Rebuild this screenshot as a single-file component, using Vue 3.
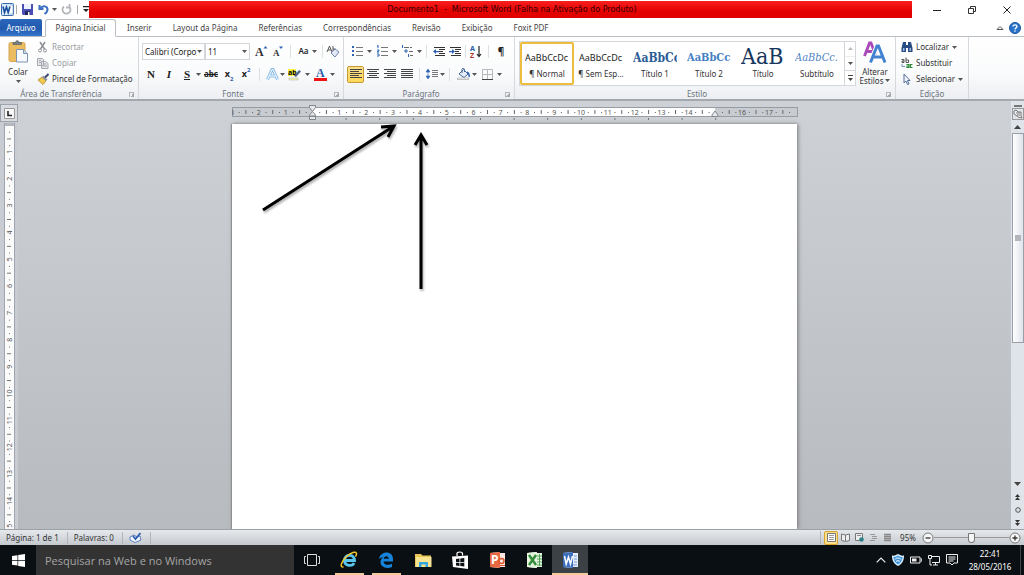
<script setup>
import { ref } from 'vue'

const tabs = ['Inserir', 'Layout da Página', 'Referências', 'Correspondências', 'Revisão', 'Exibição', 'Foxit PDF']
const styles = [
  { name: '¶ Normal', sample: 'AaBbCcDc', kind: 'body' },
  { name: '¶ Sem Esp...', sample: 'AaBbCcDc', kind: 'body' },
  { name: 'Título 1', sample: 'AaBbCc', kind: 'h1' },
  { name: 'Título 2', sample: 'AaBbCc', kind: 'h2' },
  { name: 'Título', sample: 'AaB', kind: 'title' },
  { name: 'Subtítulo', sample: 'AaBbCc.', kind: 'sub' }
]
const current = ref(0)
const search = ref('')
const zoom = ref(50)

const cm = 26.85
const origin = 80.5
function marks(from, to) {
  const list = []
  for (let q = from * 4; q <= to * 4; q++) {
    if (q === 0) continue
    const kind = q % 4 === 0 ? 'num' : q % 2 === 0 ? 'bar' : 'dot'
    list.push({ q, kind, pos: (q / 4) * cm, label: Math.abs(q / 4) })
  }
  return list
}
const across = marks(-3, 17.75).filter((m) => m.q !== 60)
const down = marks(0, 15)
const stops = [1, 2, 3, 4, 5, 6, 7, 8, 9, 10, 11, 12]
const lines = { left: [12, 9, 12, 9, 12], center: [12, 8, 12, 8, 12], right: [12, 9, 12, 9, 12], full: [12, 12, 12, 12, 12] }
function lineStart(kind, w) {
  if (kind === 'right') return 12 - w
  if (kind === 'center') return (12 - w) / 2
  return 0
}
</script>

<template>
  <div class="window">
    <header class="titlebar">
      <div class="quick">
        <svg class="wlogo" width="13" height="13" viewBox="0 0 13 13"><rect x=".5" y=".5" width="12" height="12" rx="1" fill="#dcebfa" stroke="#3569ac" /><path d="M9 2h3v9H9" fill="#fff" stroke="#7fa3d1" stroke-width=".7" /><path d="M2 3.500l1.500 6L5.500 4l1.700 5.500L9 3.500" fill="none" stroke="#1d4f9c" stroke-width="1.600" /></svg>
        <i class="bar"></i>
        <button aria-label="Salvar"><svg width="11" height="11" viewBox="0 0 11 11"><path d="M0 0h11v11H1L0 10z" fill="#4a4fb5" /><path d="M2 0h7v5H2z" fill="#eef2ff" /><path d="M3 7h5v4H3z" fill="#23285f" /><path d="M6 8h1.500v3H6z" fill="#fff" /></svg></button>
        <button aria-label="Desfazer"><svg width="11" height="11" viewBox="0 0 11 11"><path d="M1.500 1v4h4M2 4.500C5 1 9.500 2 9.500 5.500 9.500 8 8 9 6.500 10" fill="none" stroke="#3b6fc4" stroke-width="2" /></svg></button>
        <svg class="drop" viewBox="0 0 5 3"><path d="M0 0h5L2.500 3z" /></svg>
        <button aria-label="Refazer" class="redo"><svg width="11" height="11" viewBox="0 0 11 11"><path d="M3 2.500A4 4 0 1 0 8 2.500M8.500 0v3.500H5" fill="none" stroke="#b4b7bb" stroke-width="1.800" /></svg></button>
        <i class="bar"></i>
        <button aria-label="Personalizar"><svg width="6" height="7" viewBox="0 0 6 7"><path d="M0 0h6v1.200H0zM0 3h6L3 6z" fill="#222" /></svg></button>
      </div>
      <h1>Documento1 &nbsp;- &nbsp;Microsoft Word (Falha na Ativação do Produto)</h1>
      <div class="controls">
        <button aria-label="Minimizar"><svg width="10" height="10" viewBox="0 0 10 10"><path d="M1 5.500h8" stroke="#222" /></svg></button>
        <button aria-label="Restaurar"><svg width="10" height="10" viewBox="0 0 10 10"><path d="M1.500 3.500h5v5h-5zM3.500 3V1.500h5v5H7" fill="none" stroke="#333" /></svg></button>
        <button aria-label="Fechar"><svg width="10" height="10" viewBox="0 0 10 10"><path d="M1.500 1.500l7 7M8.500 1.500l-7 7" stroke="#222" /></svg></button>
      </div>
    </header>

    <nav class="tabs">
      <button class="file">Arquivo</button>
      <button class="active">Página Inicial</button>
      <button v-for="t in tabs" :key="t">{{ t }}</button>
      <span class="grow"></span>
      <button class="mini" aria-label="Minimizar faixa"><svg width="8" height="6" viewBox="0 0 8 6"><path d="M1 4.500L4 1.500l3 3z" fill="#fff" stroke="#555" /></svg></button>
      <button class="mini help" aria-label="Ajuda"><svg width="12" height="12" viewBox="0 0 12 12"><circle cx="6" cy="6" r="5.500" fill="#2b73c9" stroke="#1a55a0" /><path d="M4 4.600C4 2.400 8 2.400 8 4.600 8 6 6 5.800 6 7.400M6 8.400v1.400" fill="none" stroke="#fff" stroke-width="1.300" /></svg></button>
    </nav>

    <section class="ribbon">
      <div class="group clip">
        <div class="body">
          <button class="paste">
            <svg width="21" height="23" viewBox="0 0 21 23"><rect x="1" y="2.500" width="16" height="19" rx="1.500" fill="#ecbd60" stroke="#d6a650" /><path d="M5 4.500V2.500h2.500C7.500 0 11 0 11 2.500h2.500v2z" fill="#777d85" stroke="#555b63" stroke-width=".6" /><path d="M8.500 9.500h7l4 4v8.500h-11z" fill="#f6f9fd" stroke="#7c92b2" /><path d="M15.500 9.500v4h4" fill="#c9d8ea" stroke="#7c92b2" /></svg>
            <span>Colar</span>
            <svg class="drop" viewBox="0 0 5 3"><path d="M0 0h5L2.500 3z" /></svg>
          </button>
          <div class="stack">
            <button class="off"><svg width="12" height="12" viewBox="0 0 12 12"><path d="M3 1l4.500 7M8 1L3.500 8" stroke="#8d9197" stroke-width="1.500" /><circle cx="3" cy="9.500" r="1.500" fill="none" stroke="#8d9197" /><circle cx="8" cy="9.500" r="1.500" fill="none" stroke="#8d9197" /></svg>Recortar</button>
            <button class="off"><svg width="12" height="12" viewBox="0 0 12 12"><path d="M.5 1.500h5l1 1v6h-6zM4.500 4.500h4l2.500 2v5H4.500z" fill="#e3e5e8" stroke="#a6aab0" /><path d="M6 7h3M6 9h4M2 3.500h2M2 5.500h2" stroke="#a6aab0" /></svg>Copiar</button>
            <button><svg width="12" height="12" viewBox="0 0 12 12"><path d="M1 7l4-3 4 4-3 3.500z" fill="#f0ca4b" stroke="#a57c1c" stroke-width=".7" /><path d="M5 4l1.500-1.500 4 4L9 8z" fill="#8d97a6" /><path d="M8 4.500L11.500 1" stroke="#3d4b69" stroke-width="2" /></svg>Pincel de Formatação</button>
          </div>
        </div>
        <footer>Área de Transferência<i class="launch"></i></footer>
      </div>

      <div class="group font">
        <div class="body rows">
          <div class="row">
            <label class="combo face"><input aria-label="Fonte" value="Calibri (Corpo)"><svg class="drop" viewBox="0 0 5 3"><path d="M0 0h5L2.500 3z" /></svg></label>
            <label class="combo size"><input aria-label="Tamanho" value="11"><svg class="drop" viewBox="0 0 5 3"><path d="M0 0h5L2.500 3z" /></svg></label>
            <button class="tool w18" aria-label="Aumentar fonte"><svg width="13" height="12" viewBox="0 0 13 12"><text x="0" y="11" class="serif" font-size="12">A</text><path d="M8.500 3.500h4l-2-2.500z" fill="#2d62b5" /></svg></button>
            <button class="tool w16" aria-label="Reduzir fonte"><svg width="12" height="12" viewBox="0 0 12 12"><text x="1" y="11" class="serif" font-size="9">A</text><path d="M7 1.500h4L9 4z" fill="#2d62b5" /></svg></button>
            <i class="sep"></i>
            <button class="tool w26 case">Aa<svg class="drop" viewBox="0 0 5 3"><path d="M0 0h5L2.500 3z" /></svg></button>
            <i class="sep tight"></i>
            <button class="tool w16" aria-label="Limpar formatação"><svg width="14" height="13" viewBox="0 0 14 13"><path d="M1 7l2.500-6L6 7M2 5h3M7 1v5M7 4h2.500v2H7" fill="none" stroke="#555" /><path d="M5 8l4-4 4 3-4 5z" fill="#e3e9f5" stroke="#7085b3" /><path d="M5 8l4 4" stroke="#7085b3" /></svg></button>
          </div>
          <div class="row">
            <button class="tool w18 bold">N</button>
            <button class="tool w18 ital">I</button>
            <button class="tool w18 under">S</button><svg class="drop" viewBox="0 0 5 3"><path d="M0 0h5L2.500 3z" /></svg>
            <button class="tool w20 strike">abc</button>
            <button class="tool w16 script">x<sub>2</sub></button>
            <button class="tool w18 script">x<sup>2</sup></button>
            <i class="sep"></i>
            <button class="tool w16" aria-label="Efeitos de texto"><svg width="13" height="13" viewBox="0 0 13 13"><path d="M1.500 11.500L6 1.500h1l4.500 10M3.500 8h6" fill="none" stroke="#8abce8" stroke-width="3" /><path d="M1.500 11.500L6 1.500h1l4.500 10M3.500 8h6" fill="none" stroke="#fff" stroke-width="1" /></svg></button><svg class="drop" viewBox="0 0 5 3"><path d="M0 0h5L2.500 3z" /></svg>
            <button class="tool w20" aria-label="Realce"><svg width="14" height="13" viewBox="0 0 14 13"><path d="M0 1h8v7H0z" fill="#f7ef45" /><text x="0" y="7" font-size="7" class="bolder">ab</text><path d="M6 8l5-6 2 1.500L8 9z" fill="#53698c" /><path d="M1 10h9v2H1z" fill="#f7f7b0" stroke="#aaa" stroke-width=".5" /></svg></button><svg class="drop" viewBox="0 0 5 3"><path d="M0 0h5L2.500 3z" /></svg>
            <button class="tool w20" aria-label="Cor da fonte"><svg width="13" height="13" viewBox="0 0 13 13"><text x="2" y="9" font-size="12" class="serif blue">A</text><path d="M0 10h13v3H0z" fill="#f01212" /></svg></button><svg class="drop" viewBox="0 0 5 3"><path d="M0 0h5L2.500 3z" /></svg>
          </div>
        </div>
        <footer>Fonte<i class="launch"></i></footer>
      </div>

      <div class="group para">
        <div class="body rows">
          <div class="row">
            <button class="tool w20" aria-label="Marcadores"><svg width="11" height="12" viewBox="0 0 11 12"><path d="M0 1h2v2H0zM0 5h2v2H0zM0 9h2v2H0z" fill="#2f64b4" /><path d="M4 2.500h7M4 6.500h7M4 10.500h7" stroke="#777" /></svg></button><svg class="drop" viewBox="0 0 5 3"><path d="M0 0h5L2.500 3z" /></svg>
            <button class="tool w20" aria-label="Numeração"><svg width="11" height="12" viewBox="0 0 11 12"><path d="M1 0v3M0 5h2v1L0 7h2M0 9h2v2H0M0 1h1" fill="none" stroke="#2f64b4" /><path d="M4 2.500h7M4 6.500h7M4 10.500h7" stroke="#777" /></svg></button><svg class="drop" viewBox="0 0 5 3"><path d="M0 0h5L2.500 3z" /></svg>
            <button class="tool w20" aria-label="Vários níveis"><svg width="13" height="12" viewBox="0 0 13 12"><path d="M1.500 0v3M4 5h2v2H4zM7.500 9v3" fill="none" stroke="#2f64b4" /><path d="M3 2.500h5M9 2.500h2M8 6.500h4M9 10.500h3" stroke="#666" /></svg></button><svg class="drop" viewBox="0 0 5 3"><path d="M0 0h5L2.500 3z" /></svg>
            <i class="sep"></i>
            <button class="tool w16" aria-label="Diminuir recuo"><svg width="12" height="11" viewBox="0 0 12 11"><path d="M1 1.500h11M6 3.500h6M6 5.500h4M6 7.500h6M2 9.500h10" stroke="#333" /><path d="M0 5.500L3 3v5zM3 5h3v1.200H3z" fill="#2f64b4" /></svg></button>
            <button class="tool w16" aria-label="Aumentar recuo"><svg width="12" height="11" viewBox="0 0 12 11"><path d="M1 1.500h11M6 3.500h6M6 5.500h4M6 7.500h6M2 9.500h10" stroke="#333" /><path d="M6 5.500L3 3v5zM0 5h3v1.200H0z" fill="#2f64b4" /></svg></button>
            <i class="sep tight"></i>
            <button class="tool w16" aria-label="Classificar"><svg width="12" height="13" viewBox="0 0 12 13"><text x="0" y="6" font-size="7" class="bolder blue">A</text><text x="0" y="13" font-size="7" class="bolder red">Z</text><path d="M9 1v10M7 9l2 2.500L11 9" fill="none" stroke="#222" stroke-width="1.200" /></svg></button>
            <i class="sep"></i>
            <button class="tool w16 pil">¶</button>
          </div>
          <div class="row">
            <button v-for="(set, kind) in lines" :key="kind" class="tool align" :class="{ on: kind === 'left' }" :aria-label="kind">
              <svg width="12" height="10" viewBox="0 0 12 10"><rect v-for="(w, i) in set" :key="i" :x="lineStart(kind, w)" :y="i * 2" :width="w" height="1" fill="#444" /></svg>
            </button>
            <i class="sep"></i>
            <button class="tool w16" aria-label="Espaçamento"><svg width="12" height="12" viewBox="0 0 12 12"><path d="M2 2v8M0 4l2-3 2 3zM0 8l2 3 2-3z" fill="#2f64b4" stroke="#2f64b4" stroke-width=".6" /><path d="M6 2.500h6M6 4.500h6M6 6.500h6M6 8.500h6" stroke="#777" /></svg></button><svg class="drop" viewBox="0 0 5 3"><path d="M0 0h5L2.500 3z" /></svg>
            <i class="sep"></i>
            <button class="tool w18" aria-label="Sombreamento"><svg width="13" height="12" viewBox="0 0 13 12"><path d="M2 6l4.500-4.500L11 6 7 9.500z" fill="#e8effa" stroke="#46659a" /><path d="M5 5V1.500C5 0 7.500 0 7.500 1.500V4" fill="none" stroke="#46659a" /><path d="M10 4c2 1 2.500 3 2 5" fill="none" stroke="#2f64b4" stroke-width="1.500" /><path d="M.5 10h11v1.500H.5z" fill="#fff" stroke="#999" stroke-width=".6" /></svg></button><svg class="drop" viewBox="0 0 5 3"><path d="M0 0h5L2.500 3z" /></svg>
            <button class="tool w20" aria-label="Bordas"><svg width="11" height="11" viewBox="0 0 11 11"><path d="M.5 10V.5h10V10M5.500 1v9M1 5.500h9" fill="none" stroke="#b5b8bd" /><path d="M0 10.500h11" stroke="#444" /></svg></button><svg class="drop" viewBox="0 0 5 3"><path d="M0 0h5L2.500 3z" /></svg>
          </div>
        </div>
        <footer>Parágrafo<i class="launch"></i></footer>
      </div>

      <div class="group style">
        <div class="body">
          <div class="gallery">
            <button v-for="(s, i) in styles" :key="s.name" class="card" :class="{ picked: i === current }" @click="current = i">
              <span class="sample" :class="s.kind">{{ s.sample }}</span>
              <span class="name">{{ s.name }}</span>
            </button>
            <div class="pager">
              <button aria-label="Acima" class="dim"><svg class="drop" viewBox="0 0 5 3"><path d="M0 3h5L2.500 0z" /></svg></button>
              <button aria-label="Abaixo"><svg class="drop" viewBox="0 0 5 3"><path d="M0 0h5L2.500 3z" /></svg></button>
              <button aria-label="Mais"><svg width="5" height="6" viewBox="0 0 5 6"><path d="M0 0h5v1H0zM0 3h5L2.500 6z" fill="#444" /></svg></button>
            </div>
          </div>
          <button class="change">
            <svg width="24" height="24" viewBox="0 0 24 24"><path d="M1.500 15L6.500 2h1.500l5 13M3.500 10.500h7.500" fill="none" stroke="#a84ab8" stroke-width="2.800" /><path d="M7.500 21.500L14 5h1.500l6.500 16.500M10 16h9.500" fill="none" stroke="#fff" stroke-width="5" /><path d="M7.500 21.500L14 5h1.500l6.500 16.500M10 16h9.500" fill="none" stroke="#4383d2" stroke-width="3" /></svg>
            <span>Alterar</span><span>Estilos <svg class="drop" viewBox="0 0 5 3"><path d="M0 0h5L2.500 3z" /></svg></span>
          </button>
        </div>
        <footer>Estilo<i class="launch"></i></footer>
      </div>

      <div class="group edit">
        <div class="body">
          <div class="stack">
            <button><svg width="12" height="12" viewBox="0 0 12 12"><path d="M2 1h3v3h2V1h3l1.500 6v4H7V7H5v4H.5V7z" fill="#284d85" /><path d="M2 7h1.500v3H2zM8.500 7H10v3H8.500z" fill="#9db8df" /></svg>Localizar <svg class="drop" viewBox="0 0 5 3"><path d="M0 0h5L2.500 3z" /></svg></button>
            <button><svg width="12" height="12" viewBox="0 0 12 12"><path d="M.5 2.500h2.500v3H1V4h2M5 .5v5h2.500V3H5" fill="none" stroke="#555" /><path d="M5.500 7.500H8v3H6V9h2M11.500 7.500H9.500v3h2" fill="none" stroke="#2f8a3a" stroke-width="1.200" /><path d="M1 7v2.500h3" fill="none" stroke="#4a76b8" stroke-width=".8" /></svg>Substituir</button>
            <button><svg width="12" height="12" viewBox="0 0 12 12"><path d="M3 1v9l2-2 1.500 3.500L8 11 6.500 7.500H9z" fill="#f3f7fd" stroke="#536f9d" /></svg>Selecionar <svg class="drop" viewBox="0 0 5 3"><path d="M0 0h5L2.500 3z" /></svg></button>
          </div>
        </div>
        <footer>Edição</footer>
      </div>
    </section>

    <main class="work">
      <aside class="left">
        <button class="tabsel" aria-label="Tabulação"><svg width="11" height="11" viewBox="0 0 11 11"><path d="M.5.500h10v10H.5z" fill="#f8f8f8" stroke="#999" /><path d="M4 3v4.500h4" fill="none" stroke="#222" stroke-width="1.600" /></svg></button>
        <svg class="vruler" width="11" height="406">
          <rect x="0" y="0" width="11" height="406" fill="#fbfbfc" />
          <rect x="0" y="0" width="11" height="3" fill="#b3b8bf" />
          <path d="M.5 0v406M10.500 0v406" stroke="#9ea5ae" />
          <template v-for="m in down" :key="m.q">
            <text v-if="m.kind === 'num'" :transform="`translate(8 ${m.pos + 2}) rotate(-90)`" class="tick">{{ m.label }}</text>
            <rect v-else :x="m.kind === 'bar' ? 3 : 5" :y="m.pos + 2" :width="m.kind === 'bar' ? 4 : 1" height="1" fill="#777" />
          </template>
        </svg>
      </aside>

      <div class="canvas">
        <svg class="hruler" width="566" height="17">
          <rect x=".5" y="3.500" width="565" height="9" fill="#c8ccd1" stroke="#959ca5" />
          <rect x="80" y="4" width="403" height="8" fill="#fff" />
          <template v-for="m in across" :key="m.q">
            <text v-if="m.kind === 'num'" :x="origin + m.pos" y="11" class="tick">{{ m.label }}</text>
            <rect v-else :x="origin + m.pos" :y="m.kind === 'bar' ? 6 : 8" width="1" :height="m.kind === 'bar' ? 4 : 1" fill="#666" />
          </template>
          <rect v-for="s in stops" :key="s" :x="80 + s * 33.600" y="14" width="1" height="2" fill="#777" />
          <path d="M77.500 1.500h6v2l-3 4-3-4zM77.500 12v-1l3-3.500 3 3.500v1zM77.500 12.500h6v3h-6z" fill="#e9eaec" stroke="#81868d" />
          <path d="M480 12.500v-1.500l3-4 3 4v1.500z" fill="#e9eaec" stroke="#81868d" />
        </svg>
        <article class="page">
          <svg class="notes" width="200" height="180">
            <g fill="none" stroke="#000" stroke-width="3">
              <path d="M31 86L162 2M149 3l13-1-6 11" />
              <path d="M189 165V11M183 21l6-10 6 10" />
            </g>
          </svg>
        </article>
      </div>

      <aside class="scroll">
        <i class="split"></i>
        <button class="rulerbtn" aria-label="Régua"><svg width="10" height="10" viewBox="0 0 10 10"><path d="M1 2l2-1 2 2h3v4l1 2-3-.5L4 7 1 5z" fill="#f2eef2" stroke="#777" /><path d="M3 4h4M4 6h3" stroke="#777" /></svg></button>
        <button class="arrow" aria-label="Subir"><svg width="7" height="4" viewBox="0 0 7 4"><path d="M0 4h7L3.500 0z" fill="#444" /></svg></button>
        <div class="track"><div class="thumb"><i></i></div></div>
        <button class="arrow" aria-label="Descer"><svg width="7" height="4" viewBox="0 0 7 4"><path d="M0 0h7L3.500 4z" fill="#444" /></svg></button>
        <button class="nav" aria-label="Página anterior"><svg width="5" height="6" viewBox="0 0 5 6"><path d="M0 3h5L2.500 0zM0 6h5L2.500 3z" fill="#333" /></svg></button>
        <button class="nav" aria-label="Objeto"><svg width="6" height="6" viewBox="0 0 6 6"><circle cx="3" cy="3" r="2.300" fill="none" stroke="#555" /></svg></button>
        <button class="nav" aria-label="Próxima página"><svg width="5" height="6" viewBox="0 0 5 6"><path d="M0 0h5L2.500 3zM0 3h5L2.500 6z" fill="#333" /></svg></button>
      </aside>
    </main>

    <footer class="status">
      <span class="cell">Página: 1 de 1</span>
      <span class="cell">Palavras: 0</span>
      <span class="cell"><svg width="13" height="11" viewBox="0 0 13 11"><path d="M1 5l4-2 3 2 3-1 1 4-6 2.500L1 8z" fill="#f4f7fc" stroke="#5c7fb8" /><path d="M4 4l2.500 3L11.500 1" fill="none" stroke="#2a5db0" stroke-width="1.800" /></svg></span>
      <span class="grow"></span>
      <i class="sep"></i>
      <button class="view on" aria-label="Layout de impressão"><svg width="9" height="9" viewBox="0 0 9 9"><path d="M.5.500h8v8h-8z" fill="#fff" stroke="#777" /><path d="M2 2.500h5M2 4.500h5M2 6.500h5" stroke="#999" /></svg></button>
      <button class="view" aria-label="Leitura"><svg width="9" height="9" viewBox="0 0 9 9"><path d="M.5 1l4 1 4-1v6.500l-4 1-4-1zM4.500 2v6" fill="#eee" stroke="#777" /></svg></button>
      <button class="view" aria-label="Layout da Web"><svg width="9" height="9" viewBox="0 0 9 9"><path d="M.5.500h7v7h-7z" fill="#eee" stroke="#777" /><path d="M2 2.500h4" stroke="#888" /><circle cx="6.500" cy="6.500" r="2.300" fill="#2d7f86" /></svg></button>
      <button class="view" aria-label="Estrutura"><svg width="9" height="9" viewBox="0 0 9 9"><path d="M1 1.500h5M3 3.500h5M3 5.500h5M1 7.500h5" stroke="#999" /></svg></button>
      <button class="view" aria-label="Rascunho"><svg width="9" height="9" viewBox="0 0 9 9"><path d="M1 1.500h7M1 3.500h7M1 5.500h7M1 7.500h7" stroke="#888" stroke-width="1.500" /></svg></button>
      <span class="percent">95%</span>
      <button class="round" aria-label="Reduzir"><svg width="12" height="12" viewBox="0 0 12 12"><circle cx="6" cy="6" r="5" fill="#f5f6f7" stroke="#777" /><path d="M3.500 6h5" stroke="#333" stroke-width="1.300" /></svg></button>
      <input v-model="zoom" type="range" aria-label="Zoom">
      <button class="round" aria-label="Ampliar"><svg width="12" height="12" viewBox="0 0 12 12"><circle cx="6" cy="6" r="5" fill="#f5f6f7" stroke="#777" /><path d="M3.500 6h5M6 3.500v5" stroke="#333" stroke-width="1.300" /></svg></button>
    </footer>

    <div class="taskbar">
      <button class="start" aria-label="Iniciar"><svg width="13" height="13" viewBox="0 0 13 13"><path d="M0 2l5.500-.8V6H0zM6.200 1.100L13 0v6H6.200zM0 6.800h5.500v4.800L0 10.800zM6.200 6.800H13V13l-6.800-1.100z" fill="#fff" /></svg></button>
      <input v-model="search" class="search" aria-label="Pesquisar" placeholder="Pesquisar na Web e no Windows">
      <button class="app" aria-label="Visão de tarefas"><svg width="16" height="12" viewBox="0 0 16 12"><path d="M3.500.500h9v11h-9zM2 2.500H.5v7H2M14 2.500h1.500v7H14" fill="none" stroke="#ddd" /></svg></button>
      <button class="app open" aria-label="Internet Explorer"><svg width="18" height="18" viewBox="0 0 18 18"><path d="M5 9.500h9.500C14.500 2.500 4.500 2.500 4.500 9.500c0 6 8 6 9.500 2.500" fill="none" stroke="#58c5ef" stroke-width="2.800" /><path d="M3.500 16C-.5 16.500 1 11 6 6s10-6 10.500-3.500c.2 1-.3 2-1 3" fill="none" stroke="#f4c52e" stroke-width="1.500" /></svg></button>
      <button class="app open" aria-label="Edge"><svg width="16" height="16" viewBox="0 0 16 16"><path d="M1 7C2-1.500 15-2 15 7v2.500H5.500c.5 4 5 4 8.500 2.200V15C8.500 17.500 2.500 15 2.500 10c0-2.500 1.500-4 3-5C4 5 2 6 1 7zM5.800 6.800h5C10.500 3.500 6.300 3.500 5.800 6.800z" fill="#1683d8" fill-rule="evenodd" /></svg></button>
      <button class="app" aria-label="Explorador"><svg width="17" height="15" viewBox="0 0 17 15"><path d="M0 1h6l1.500 1.500H16V14H0z" fill="#e9c657" /><path d="M1 4h15.500v10H1z" fill="#f9e491" /><path d="M4 14V9h9v5h-2.500v-2.500h-4V14z" fill="#35a5de" /></svg></button>
      <button class="app" aria-label="Loja"><svg width="16" height="18" viewBox="0 0 16 18"><path d="M0 5.500l16-1V18L1 16z" fill="#fff" /><path d="M5 5V2.500C5 .5 10.500.500 10.500 2.500v2" fill="none" stroke="#fff" stroke-width="1.200" /><path d="M4 8l3.500-.4V11H4zM8.300 7.500l4-.4V11h-4zM4 11.800h3.500V15L4 14.600zM8.300 11.800h4v3.700l-4-.4z" fill="#0b1014" /></svg></button>
      <button class="app" aria-label="PowerPoint"><svg width="17" height="16" viewBox="0 0 17 16"><path d="M1 1l9-1v1h6v14h-6v1l-9-1z" fill="#fbe9e2" /><path d="M1 1l10-1v16L1 15z" fill="#e76843" /><text x="2" y="12" font-size="12" class="white">P</text><circle cx="12.500" cy="9" r="2.500" fill="none" stroke="#df552e" stroke-width="1.500" /><path d="M11 13.500h5" stroke="#df552e" /></svg></button>
      <button class="app" aria-label="Excel"><svg width="17" height="16" viewBox="0 0 17 16"><path d="M1 1l9-1v1h6v14h-6v1l-9-1z" fill="#e4f4e1" /><path d="M1 1l10-1v16L1 15z" fill="#e5f3df" /><path d="M3 3l7 10M10 3L3 13" stroke="#358e3e" stroke-width="2.500" /><path d="M11 4h5M11 7h5M11 10h5M11 13h5M13.500 2v12" stroke="#53a758" /></svg></button>
      <button class="app open word" aria-label="Word"><svg width="17" height="16" viewBox="0 0 17 16"><path d="M1 1l9-1v1h6v14h-6v1l-9-1z" fill="#e6effb" /><path d="M1 1l10-1v16L1 15z" fill="#3c6ebd" /><path d="M2.500 4l1.700 8L6.500 5l2 7 2-8" fill="none" stroke="#fff" stroke-width="1.500" /><path d="M12 4h3M12 7h3M12 10h3M11 13h4" stroke="#6c95d4" /></svg></button>
      <span class="grow"></span>
      <div class="tray">
        <svg width="10" height="6" viewBox="0 0 10 6"><path d="M.7 5.300L5 1l4.300 4.300" fill="none" stroke="#eee" stroke-width="1.200" /></svg>
        <svg width="12" height="12" viewBox="0 0 12 12"><path d="M0 1.500C3 2 4 1 6 0c2 1 3 2 6 1.500C12 7 10 10 6 12 2 10 0 7 0 1.500z" fill="#d9efff" /><path d="M1.500 3C3.500 3 4.500 2.500 6 1.500c1.500 1 2.500 1.500 4.500 1.500-.3 4-2 6-4.500 7.500C3.500 9 1.800 7 1.500 3z" fill="#3e92d8" /><path d="M3 5.500c1-2 5-2 6 0M4 7.500c1-1 3-1 4 0" fill="none" stroke="#fff" /></svg>
        <svg width="12" height="8" viewBox="0 0 12 8"><path d="M.5 1h9.500v6H.5zM10.500 3H12v2h-1.500" fill="none" stroke="#eee" /><path d="M2 2.500h4.500v3H2z" fill="#eee" /></svg>
        <svg width="12" height="11" viewBox="0 0 12 11"><path d="M4 1.500h7.500v6H4M7.500 8v2M5 10h5M.5.500h3v3h-3zM2 4v6h2" fill="none" stroke="#eee" /></svg>
        <svg width="12" height="12" viewBox="0 0 12 12"><path d="M.5.500h11v8.500H8L6 11 4 9H.5z" fill="none" stroke="#eee" /><path d="M2.500 3h7M2.500 5h7M2.500 7h5" stroke="#eee" /></svg>
      </div>
      <time><span>22:41</span><span>28/05/2016</span></time>
      <i class="peek"></i>
    </div>
  </div>
</template>

<style>
body { overflow: hidden; }
</style>

<style scoped>
.window, .window * { box-sizing: border-box; }
.window { height: 100vh; min-height: 320px; display: flex; flex-direction: column; font: 8px/10px "Noto Sans", "Open Sans", sans-serif; color: #333; background: #fff; }
button { font: inherit; color: inherit; background: none; border: 0; padding: 0; margin: 0; display: flex; align-items: center; justify-content: center; white-space: nowrap; }
input { font: inherit; color: inherit; border: 0; padding: 0; margin: 0; background: none; min-width: 0; outline: 0; }
svg { display: block; flex: none; }
.grow { flex: 1; }
.drop { width: 5px; height: 3px; fill: #555; }

.titlebar { height: 19px; flex: none; display: flex; align-items: center; }
.quick { width: 89px; display: flex; align-items: center; gap: 5px; height: 17px; padding-left: 1px; }
.quick .bar { width: 1px; height: 9px; background: #aaa; }
.quick .wlogo { margin-right: -3px; }
.quick .redo { margin-left: -1px; }
.quick .drop { margin-left: -2px; }
.titlebar h1 { flex: 1; margin: 0; height: 17px; background: linear-gradient(#f92020, #e60000 60%, #dd0000); font: 8px/17px "DejaVu Sans", "Noto Sans", sans-serif; text-align: center; color: #300; padding-left: 23px; white-space: nowrap; }
.controls { width: 112px; display: flex; justify-content: space-between; padding: 0 12px 0 20px; }

.tabs { height: 18px; flex: none; display: flex; gap: 1px; border-bottom: 1px solid #b9bec5; color: #444; }
.tabs button { padding: 0 10px; }
.tabs .file { width: 42px; padding: 0; background: linear-gradient(#2a67bd, #2059ae 55%, #3377cc); color: #fff; border-radius: 2px 2px 0 0; }
.tabs .active { width: 71px; padding: 0; margin: 0 0 0 2px; height: 18px; border: 1px solid #b9bec5; border-bottom-color: #fff; border-radius: 3px 3px 0 0; background: #fff; }
.tabs .mini { padding: 0 3px; }
.tabs .help { padding: 0 3px 0 1px; }

.ribbon { height: 64px; flex: none; display: flex; background: linear-gradient(#fff, #fafbfc 60%, #eceef2); border-bottom: 2px solid #a4a9b0; }
.group { display: flex; flex-direction: column; border-right: 1px solid #d5d9de; flex: none; }
.group > .body { flex: 1; display: flex; }
.group > footer { height: 12px; text-align: center; color: #6d7580; line-height: 14px; position: relative; padding-right: 16px; }
.launch { position: absolute; right: 4px; top: 5px; width: 5px; height: 5px; border: solid #b0b5bc; border-width: 1px 0 0 1px; background: linear-gradient(135deg, transparent 50%, #aaa 50%); }
.clip { width: 139px; }
.font { width: 205px; }
.para { width: 171px; }
.style { width: 381px; }
.edit { width: 73px; }
.edit > footer { padding: 0; }
.paste { width: 36px; flex-direction: column; justify-content: flex-start; padding-top: 3px; }
.paste span { margin: 4px 0 3px; }
.stack { display: flex; flex-direction: column; padding: 2px 0 0 1px; align-items: flex-start; }
.stack button { height: 16px; gap: 3px; }
.stack .off { color: #9a9da2; }
.edit .stack { padding-left: 5px; }

.rows { flex-direction: column; padding: 5px 2px 0 3px; gap: 5px; }
.row { height: 18px; display: flex; align-items: center; }
.combo { display: flex; align-items: center; height: 17px; border: 1px solid #d3d7dc; background: #fff; padding: 0 2px; color: #222; }
.face { width: 64px; }
.size { width: 46px; margin-right: 2px; }
.combo input { flex: 1; width: 10px; height: 13px; }
.tool { height: 17px; color: #222; gap: 3px; }
.w16 { width: 16px; }
.w18 { width: 18px; }
.w20 { width: 20px; }
.w26 { width: 26px; }
.row .sep { width: 1px; height: 13px; background: #dcdfe3; margin: 0 4px; }
.row .tight { margin: 0 2px; }
.case { font-weight: 600; }
.bold { font: 900 11px "Liberation Serif", serif; }
.ital { font: italic 700 11px "Liberation Serif", serif; }
.under { font: 700 11px "Liberation Serif", serif; text-decoration: underline; }
.strike { font-weight: 700; text-decoration: line-through; }
.script { font-size: 9px; font-weight: 700; gap: 0; }
.script sub, .script sup { font-size: 6px; color: #2d62b5; line-height: 8px; }
.script sub { align-self: flex-end; }
.script sup { align-self: flex-start; }
.pil { font-size: 10px; font-weight: 700; }
.align { width: 17px; }
.align.on { background: linear-gradient(#fbe08b, #ffd95a); border: 1px solid #c79a35; border-radius: 2px; }
.serif { font-family: "Liberation Serif", serif; font-weight: 700; fill: #333; }
.bolder { font-weight: 700; }
.blue { fill: #2b5ca8; }
.red { fill: #b03030; }
.white { font-weight: 700; fill: #fff; }

.style > .body { padding: 4px 0 0 4px; }
.gallery { display: flex; width: 337px; height: 45px; border: 1px solid #d3d7dc; background: #fff; }
.card { width: 54px; flex-direction: column; justify-content: flex-end; padding-bottom: 4px; border: 2px solid transparent; }
.card.picked { border-color: #eebd3d; border-radius: 2px; }
.sample { width: 44px; height: 24px; overflow: hidden; text-align: left; color: #222; }
.name { margin-top: 1px; }
.sample.body { font-size: 9px; line-height: 28px; }
.sample.h1 { font: 700 12px/28px "DejaVu Serif Condensed", "DejaVu Serif", serif; color: #2a5c96; }
.sample.h2 { font: 700 11px/28px "DejaVu Serif Condensed", "DejaVu Serif", serif; color: #4580c4; }
.sample.title { font: 23px/24px "DejaVu Serif Condensed", "DejaVu Serif", serif; color: #17365d; }
.sample.sub { font: italic 11px/28px "DejaVu Serif Condensed", "DejaVu Serif", serif; color: #4f86c6; }
.pager { flex: 1; display: flex; flex-direction: column; border-left: 1px solid #d3d7dc; }
.pager button { flex: 1; border-bottom: 1px solid #d3d7dc; }
.pager button:last-child { border-bottom: 0; }
.pager .dim { opacity: .4; }
.change { width: 38px; flex-direction: column; justify-content: flex-start; }
.change span { display: flex; align-items: center; gap: 2px; line-height: 9px; }
.change > svg { margin-bottom: 2px; }

.work { flex: 1; min-height: 0; display: grid; grid-template-columns: 18px 1fr 13px; background: linear-gradient(#ced2d7, #b7babe); overflow: hidden; }
.left { overflow: hidden; display: flex; flex-direction: column; background: #c9cdd3; }
.tabsel { width: 18px; height: 18px; border: 1px solid #9ea4ab; margin: 3px 0 1px; flex: none; background: #d9dce0; }
.vruler { margin-left: 4px; }
.tick { font-size: 7px; fill: #555; text-anchor: middle; }
.canvas { display: flex; flex-direction: column; align-items: center; min-height: 0; padding-top: 3px; }
.page { width: 565px; flex: 1; background: #fff; margin-top: 3px; box-shadow: 1px 0 4px #777, -1px 0 1px #999; position: relative; }
.notes { position: absolute; left: 0; top: 0; filter: drop-shadow(1px 2px 1px #aaa); }
.scroll { background: #dfe3ea; display: flex; flex-direction: column; align-items: center; min-height: 0; }
.split { width: 8px; height: 2px; background: #777; margin: 4px 0 1px; }
.rulerbtn { width: 12px; height: 12px; border: 1px solid #999; flex: none; }
.arrow { height: 13px; width: 13px; flex: none; }
.track { flex: 1; width: 12px; min-height: 0; }
.thumb { height: 61%; border: 1px solid #9aa0a8; background: linear-gradient(90deg, #fff, #dfe3eb); display: flex; align-items: center; justify-content: center; }
.thumb i { width: 6px; height: 6px; background: #b2b6bc; }
.nav { height: 13px; width: 13px; flex: none; }

.status { height: 16px; flex: none; display: flex; align-items: center; background: linear-gradient(#e6e9ec, #c4c9cf); border-top: 1px solid #9ca1a8; color: #333; padding-right: 3px; }
.cell { height: 12px; display: flex; align-items: center; padding: 0 8px 0 6px; border-right: 1px solid #b0b5bb; }
.status .sep { width: 1px; height: 13px; background: #b0b5bb; margin-right: 3px; }
.view { width: 14px; height: 14px; }
.view.on { background: #ffe08a; border: 1px solid #d9a52d; border-radius: 2px; }
.percent { width: 28px; text-align: center; }
.round { width: 12px; }
.status input { width: 75px; height: 12px; appearance: none; background: linear-gradient(#999, #999) center / 100% 1px no-repeat; }
.status input::-webkit-slider-thumb { appearance: none; width: 7px; height: 10px; border: 1px solid #777; border-radius: 1px 1px 4px 4px; background: #f5f6f7; }

.taskbar { height: 30px; flex: none; display: flex; align-items: stretch; background: #0a0f13; color: #fff; }
.start { width: 36px; }
.search { width: 258px; background: #333; font-family: "Open Sans", "Noto Sans", sans-serif; font-size: 11px; padding-left: 9px; }
.search::placeholder { color: #a5a5a5; opacity: 1; }
.app { width: 36px; margin-right: 1px; }
.app.open { box-shadow: inset 4px 0 #0a0f13, inset -3px 0 #0a0f13, inset 0 -2px #f1cb9b; }
.app.word { background: #3c4146; box-shadow: inset 0 -2px #f1cb9b; margin-left: -1px; }
.tray { display: flex; align-items: center; gap: 6px; }
.taskbar time { width: 60px; margin-left: 2px; display: flex; flex-direction: column; align-items: center; justify-content: center; line-height: 13px; font-size: 8px; }
.peek { width: 4px; border-left: 1px solid #444; }
</style>
